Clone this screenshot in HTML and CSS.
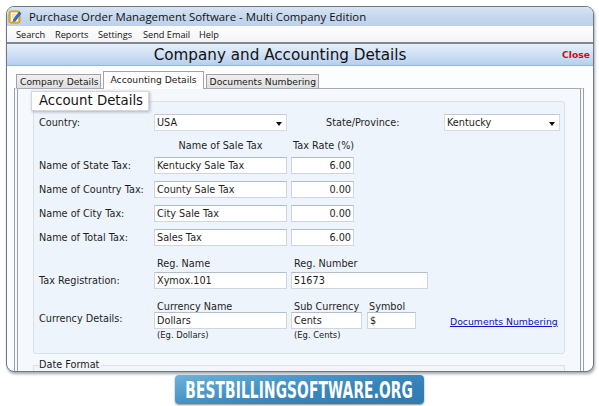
FILE: index.html
```html
<!DOCTYPE html>
<html>
<head>
<meta charset="utf-8">
<link rel="stylesheet" href="styles.css">
</head>
<body>
<div class="window">
  <div class="titlebar">
    <svg class="appicon" width="14" height="15" viewBox="0 0 14 15">
      <rect x="1" y="2" width="11" height="12" rx="2" fill="#f2c230" stroke="#b8860b" stroke-width="0.8"/>
      <rect x="3" y="3.5" width="7" height="9" fill="#fffdf0"/>
      <line x1="4" y1="6" x2="9" y2="6" stroke="#9aa" stroke-width="0.6"/>
      <line x1="4" y1="8" x2="9" y2="8" stroke="#9aa" stroke-width="0.6"/>
      <path d="M5 11 L11 3 L13 4.5 L7 12.5 Z" fill="#2f6fd0" stroke="#1a3f80" stroke-width="0.5"/>
      <path d="M5 11 L4.5 13.5 L7 12.5 Z" fill="#e05a20"/>
    </svg>
    <span class="apptitle">Purchase Order Management Software - Multi Company Edition</span>
  </div>
  <div class="menubar">
    <span class="menuitem">Search</span>
    <span class="menuitem">Reports</span>
    <span class="menuitem">Settings</span>
    <span class="menuitem">Send Email</span>
    <span class="menuitem">Help</span>
  </div>
  <div class="header">
    <div class="headtitle">Company and Accounting Details</div>
    <div class="close">Close</div>
  </div>
  <div class="tabs">
    <div class="tab">Company Details</div>
    <div class="tab active">Accounting Details</div>
    <div class="tab">Documents Numbering</div>
  </div>
  <div class="panel">
    <fieldset class="group">
      <legend class="boxlegend">Account Details</legend>
      <div class="row r-country">
        <div class="lbl">Country:</div>
        <div class="select w133">USA<span class="caret"></span></div>
        <div class="lbl lbl-state">State/Province:</div>
        <div class="select w116">Kentucky<span class="caret"></span></div>
      </div>
      <div class="row r-head">
        <div class="lbl"></div>
        <div class="colhead w133 center">Name of Sale Tax</div>
        <div class="colhead w63 gapl">Tax Rate (%)</div>
      </div>
      <div class="row r-tax first">
        <div class="lbl">Name of State Tax:</div>
        <input class="inp w133" value="Kentucky Sale Tax" readonly>
        <input class="inp w63 num gapl" value="6.00" readonly>
      </div>
      <div class="row r-tax">
        <div class="lbl">Name of Country Tax:</div>
        <input class="inp w133" value="County Sale Tax" readonly>
        <input class="inp w63 num gapl" value="0.00" readonly>
      </div>
      <div class="row r-tax">
        <div class="lbl">Name of City Tax:</div>
        <input class="inp w133" value="City Sale Tax" readonly>
        <input class="inp w63 num gapl" value="0.00" readonly>
      </div>
      <div class="row r-tax">
        <div class="lbl">Name of Total Tax:</div>
        <input class="inp w133" value="Sales Tax" readonly>
        <input class="inp w63 num gapl" value="6.00" readonly>
      </div>
      <div class="row r-sub r-reghead">
        <div class="lbl"></div>
        <div class="colhead w133 padl">Reg. Name</div>
        <div class="colhead w137 gapl padl">Reg. Number</div>
      </div>
      <div class="row r-reg">
        <div class="lbl">Tax Registration:</div>
        <input class="inp w133" value="Xymox.101" readonly>
        <input class="inp w137 gapl" value="51673" readonly>
      </div>
      <div class="row r-sub r-curhead">
        <div class="lbl"></div>
        <div class="colhead w133 padl">Currency Name</div>
        <div class="colhead w71 gapl padl">Sub Currency</div>
        <div class="colhead w49 gap5 padl2">Symbol</div>
      </div>
      <div class="row r-cur">
        <div class="lbl lbl-cur">Currency Details:</div>
        <input class="inp w133" value="Dollars" readonly>
        <input class="inp w71 gapl" value="Cents" readonly>
        <input class="inp w49 gap5" value="$" readonly>
        <a class="link" href="#">Documents Numbering</a>
      </div>
      <div class="row r-eg">
        <div class="lbl"></div>
        <div class="eg w133 padl">(Eg. Dollars)</div>
        <div class="eg w71 gapl padl">(Eg. Cents)</div>
      </div>
    </fieldset>
    <fieldset class="group2">
      <legend class="plainlegend">Date Format</legend>
      <div class="spacer"></div>
    </fieldset>
  </div>
</div>
<div class="banner"><span class="bannertext">BESTBILLINGSOFTWARE.ORG</span></div>
</body>
</html>
```

FILE: styles.css
```css
html, body {
  margin: 0;
  padding: 0;
  background: #ffffff;
}
body {
  width: 599px;
  height: 406px;
  overflow: hidden;
  font-family: "DejaVu Sans", Verdana, sans-serif;
  font-size: 9.7px;
  color: #1e1e1e;
}
.window {
  margin: 6px 5px 0 6px;
  height: 364px;
  border: 1px solid #6d7885;
  border-radius: 8px 8px 8px 8px;
  background: #fcfdfe;
  overflow: hidden;
  box-shadow: 1px 2px 3px rgba(0, 0, 0, 0.35);
  display: flex;
  flex-direction: column;
}
.titlebar {
  height: 19px;
  flex: none;
  display: flex;
  align-items: center;
  background: linear-gradient(#d7e4f3, #c3d6ec 60%, #bcd1ea);
  padding-left: 1px;
}
.appicon {
  margin-left: 0;
  margin-right: 7px;
  flex: none;
}
.apptitle {
  font-family: "Open Sans", "Noto Sans", sans-serif;
  font-size: 11.4px;
  color: #111;
  white-space: nowrap;
}
.menubar {
  height: 16px;
  flex: none;
  display: flex;
  align-items: center;
  background: linear-gradient(#fdfdfd, #f4f5f7);
  border-bottom: 2px solid #7c8894;
  padding-left: 9px;
}
.menuitem {
  font-family: "Open Sans", "Noto Sans", sans-serif;
  font-size: 9.2px;
  color: #111;
  white-space: nowrap;
}
.menuitem:nth-child(1) { width: 39px; }
.menuitem:nth-child(2) { width: 43px; }
.menuitem:nth-child(3) { width: 45px; }
.menuitem:nth-child(4) { width: 56px; }
.header {
  height: 21px;
  flex: none;
  display: grid;
  grid-template-columns: 1fr auto;
  column-gap: 9px;
  align-items: center;
  padding-right: 3px;
  background: linear-gradient(#e6effa, #cfe0f5 50%, #b7cfee);
  border-bottom: 1px solid #95b4dc;
}
.headtitle {
  text-align: center;
  font-size: 15.2px;
  color: #111;
  white-space: nowrap;
}
.close {
  font-weight: bold;
  font-size: 9.2px;
  color: #e0001b;
}
.tabs {
  flex: none;
  height: 18px;
  margin-top: 5px;
  margin-left: 9px;
  display: flex;
  align-items: flex-end;
  gap: 2px;
}
.tab {
  height: 15px;
  line-height: 14px;
  padding: 0 2px 0 3px;
  font-size: 9.2px;
  background: linear-gradient(#f0f0f0, #dedede);
  border: 1px solid #a3a3a3;
  border-bottom: none;
  box-sizing: border-box;
  white-space: nowrap;
  color: #1a1a1a;
}
.tab.active {
  height: 18px;
  line-height: 15px;
  padding: 0 6px 0 6px;
  background: #ffffff;
  position: relative;
  z-index: 1;
}
.panel {
  flex: 1;
  margin: -1px 9px 0 7px;
  border-top: 1px solid #a4acb5;
  border-left: 4px double #98a2ad;
  border-right: 4px double #98a2ad;
  background: #f5f8fc;
  padding-top: 2px;
}
.group {
  margin: 0 15px;
  padding: 0 4px 12px 5px;
  border: 1px solid #d9e1ea;
  border-radius: 3px;
  background: #eef4fb;
  min-width: 0;
}
.boxlegend {
  margin-left: -8px;
  padding: 0 5px 0 7px;
  height: 20px;
  box-sizing: border-box;
  line-height: 18px;
  font-size: 13.3px;
  color: #141414;
  background: #ffffff;
  border: 1px solid #d4d8dd;
  box-shadow: 1px 1px 3px rgba(0, 0, 0, 0.28);
}
.row {
  display: flex;
  align-items: center;
}
.r-country { margin-top: 3px; height: 17px; }
.r-head { margin-top: 7px; height: 14px; }
.r-tax { margin-top: 7px; height: 17px; }
.r-tax.first { margin-top: 5px; }
.r-reghead { margin-top: 11px; }
.r-sub { height: 12px; }
.r-reg { margin-top: 3px; height: 17px; }
.r-curhead { margin-top: 11px; }
.r-cur { margin-top: 0; height: 17px; }
.r-eg { height: 12px; }
.lbl {
  width: 115px;
  flex: none;
  white-space: nowrap;
}
.lbl-cur { padding-bottom: 5px; box-sizing: border-box; }
.lbl-state {
  margin-left: 39px;
  width: 118px;
}
.select {
  height: 17px;
  box-sizing: border-box;
  border: 1px solid #d6dce3;
  border-top-color: #c3cad2;
  background: #ffffff;
  line-height: 15px;
  padding-left: 2px;
  display: flex;
  align-items: center;
  justify-content: space-between;
  padding-right: 4px;
  flex: none;
}
.caret {
  width: 0;
  height: 0;
  border-left: 3px solid transparent;
  border-right: 3px solid transparent;
  border-top: 4px solid #111;
  margin-top: 2px;
}
.inp {
  height: 17px;
  box-sizing: border-box;
  border: 1px solid #d0d6dd;
  border-top-color: #b5bdc6;
  background: #ffffff;
  font-family: "DejaVu Sans", Verdana, sans-serif;
  font-size: 9.7px;
  color: #1e1e1e;
  padding: 0 2px;
  margin: 0;
  outline: none;
  flex: none;
}
.num { text-align: right; }
.w133 { width: 133px; }
.w116 { width: 116px; }
.w63 { width: 63px; }
.w137 { width: 137px; }
.w71 { width: 71px; }
.w49 { width: 49px; }
.gapl { margin-left: 4px; }
.gap5 { margin-left: 5px; }
.padl { padding-left: 3px; box-sizing: border-box; }
.padl2 { padding-left: 2px; box-sizing: border-box; }
.colhead {
  flex: none;
  white-space: nowrap;
}
.center { text-align: center; }
.r-head .gapl { padding-left: 2px; box-sizing: border-box; }
.eg {
  flex: none;
  font-size: 8.4px;
  white-space: nowrap;
  color: #222;
}
.link {
  margin-left: 34px;
  color: #0a14c8;
  font-size: 9.3px;
  white-space: nowrap;
  text-decoration: underline;
  margin-top: 2px;
}
.group2 {
  margin: 4px 15px 0;
  padding: 0 4px 0 5px;
  border: 1px solid #d9e1ea;
  border-bottom: none;
  background: #f2f6fb;
  min-width: 0;
}
.plainlegend {
  padding: 0 2px 0 0;
  line-height: 14px;
  color: #1a1a1a;
}
.spacer { height: 20px; }
.banner {
  width: 249px;
  height: 29px;
  margin: 3px auto 0;
  border-radius: 4px;
  background: linear-gradient(170deg, #6eb2da 0%, #4897c8 35%, #3785bb 60%, #2f7ab0 100%);
  box-shadow: 0 1px 2px rgba(0, 0, 0, 0.45);
  display: flex;
  align-items: center;
  justify-content: center;
  overflow: hidden;
}
.bannertext {
  display: inline-block;
  font-family: "Liberation Sans Narrow", "DejaVu Sans Condensed", sans-serif;
  font-weight: bold;
  font-size: 23px;
  color: #ffffff;
  white-space: nowrap;
  transform: scaleX(0.665);
  letter-spacing: 0.2px;
}
```
